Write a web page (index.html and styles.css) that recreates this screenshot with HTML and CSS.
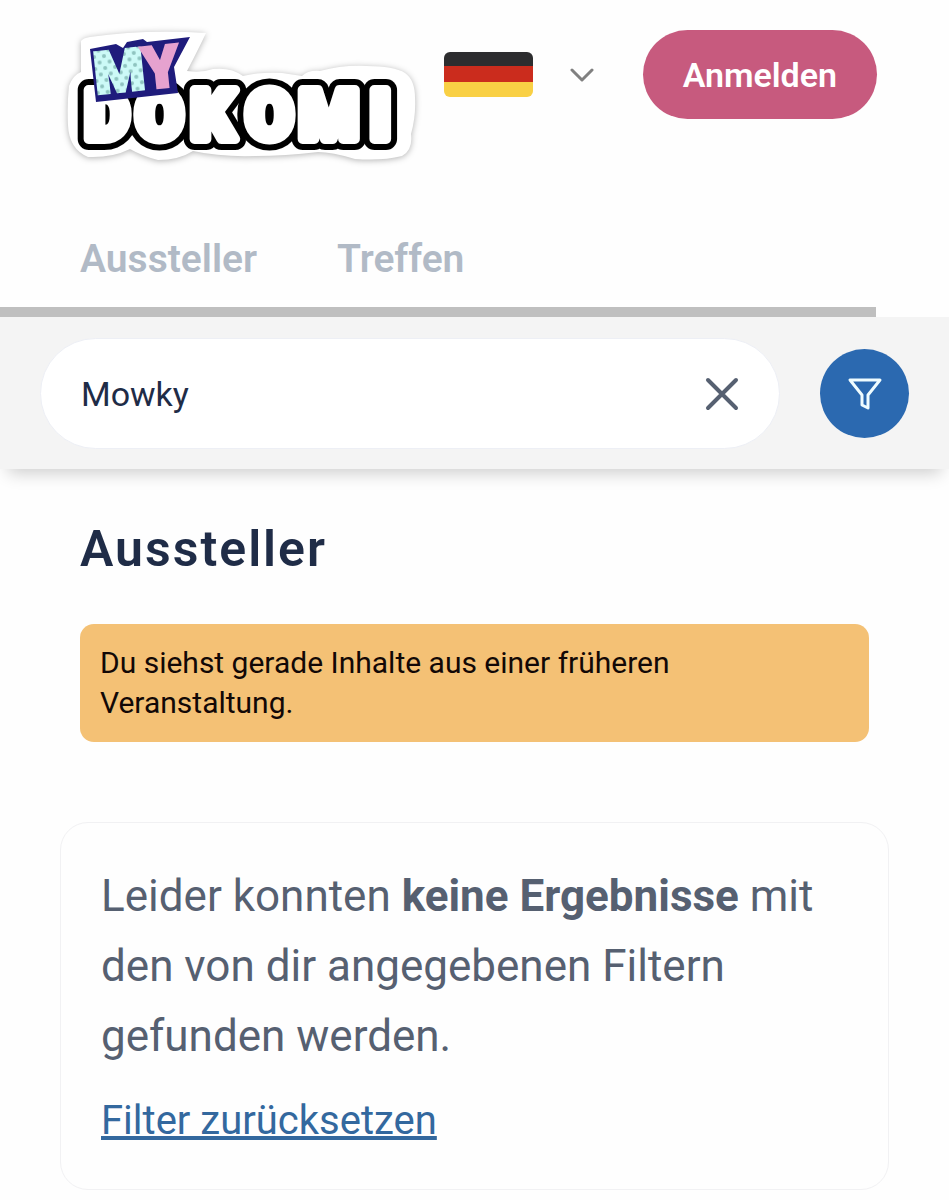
FILE: index.html
```html
<!DOCTYPE html>
<html lang="de">
<head>
    <meta charset="UTF-8">
    <meta name="viewport" content="width=device-width, initial-scale=1.0">
    <title>Aussteller - MyDoKomi</title>
    <link rel="stylesheet" href="styles.css">
</head>
<body>
    <header class="header">
        <a class="logo" href="#" aria-label="My Dokomi">
            <svg width="368" height="160" viewBox="60 15 368 160">
                <defs>
                    <pattern id="dots" width="10" height="12" patternUnits="userSpaceOnUse">
                        <rect width="10" height="12" fill="#ccfaf7"/>
                        <circle cx="3" cy="3" r="2" fill="#8fc4c0"/>
                        <circle cx="8" cy="9" r="2" fill="#8fc4c0"/>
                    </pattern>
                </defs>
                <path class="sticker" d="M81 41Q83 38 90 37Q145 29 206 33Q200 46 187 71Q202 73 213 69Q231 67 243 76Q258 72 282 73L302 76Q308 70 320 71Q342 65 366 66Q394 66 405 73Q415 80 415 98Q416 116 411 134Q413 150 402 156Q382 161 355 159Q332 152 318 152Q285 156 255 156Q220 157 193 151Q179 160 158 160Q142 156 130 149Q112 158 88 157Q69 149 68 125Q67 105 69 86Q73 75 81 72Z"/>
                <g class="word">
                    <text id="dokomi" x="85 136 191 246 299 370" y="139">DOKOMI</text>
                    <use href="#dokomi" class="word-fill"/>
                </g>
                <path fill="#1f1c7c" d="M90 49L116 44L123 48L127 42L143 39L147 42L190 37L174 67L178 93L96 102Z"/>
                <g class="my" transform="rotate(-6 97 95)">
                    <text x="96" y="94" fill="url(#dots)" stroke="url(#dots)">M</text>
                    <text x="145" y="94" fill="#e6a2cf" stroke="#e6a2cf">Y</text>
                </g>
            </svg>
        </a>
        <button class="language" type="button" aria-label="Sprache: Deutsch">
            <svg class="flag" width="89" height="45" viewBox="0 0 89 45">
                <path fill="#2d2d2f" d="M0 0h89v15H0z"/>
                <path fill="#cb2c1d" d="M0 14h89v16H0z"/>
                <path fill="#f9d045" d="M0 30h89v15H0z"/>
            </svg>
            <svg width="24" height="16" viewBox="0 0 24 16" fill="none" stroke="#808080" stroke-width="3" stroke-linecap="round" stroke-linejoin="round">
                <path d="M2 3l10 10L22 3"/>
            </svg>
        </button>
        <button class="login" type="button">Anmelden</button>
    </header>

    <nav class="nav">
        <a href="#">Aussteller</a>
        <a href="#">Treffen</a>
    </nav>

    <form class="search">
        <div class="search-field">
            <input type="text" value="Mowky" aria-label="Suche">
            <button class="clear" type="reset" aria-label="Suche leeren">
                <svg width="34" height="34" viewBox="0 0 34 34" fill="none" stroke="#566071" stroke-width="4" stroke-linecap="round">
                    <path d="M3 3l28 28M31 3L3 31"/>
                </svg>
            </button>
        </div>
        <button class="filter" type="button" aria-label="Filter">
            <svg width="36" height="36" viewBox="0 0 36 36" fill="none" stroke="#effcff" stroke-width="3" stroke-linejoin="round">
                <path d="M3 4h30L21 19v13l-6-3V19z"/>
            </svg>
        </button>
    </form>

    <main class="content">
        <h1>Aussteller</h1>
        <div class="notice">Du siehst gerade Inhalte aus einer früheren Veranstaltung.</div>
        <section class="card">
            <p>Leider konnten <strong>keine Ergebnisse</strong> mit den von dir angegebenen Filtern gefunden werden.</p>
            <a href="#">Filter zurücksetzen</a>
        </section>
    </main>
</body>
</html>
```
FILE: styles.css
```css
* {
    margin: 0;
    padding: 0;
    box-sizing: border-box;
}

body {
    font-family: Roboto, sans-serif;
    color: #1f2c47;
    background: #fefefe;
}

button {
    font-family: inherit;
    border: none;
    background: none;
    cursor: pointer;
}

svg {
    display: block;
}

.header {
    display: flex;
    align-items: flex-start;
    padding: 15px 72px 32px 60px;
}

.sticker {
    fill: white;
    filter: drop-shadow(0 1px 3px rgba(0, 0, 0, 0.3));
}

.word {
    font-size: 68px;
    font-weight: 900;
    stroke-linejoin: round;
    stroke: black;
    stroke-width: 22px;
}

.word-fill {
    fill: white;
    stroke: white;
    stroke-width: 10px;
}

.my {
    font-size: 58px;
    font-weight: 900;
    stroke-width: 3px;
}

.language {
    display: flex;
    align-items: center;
    gap: 37px;
    margin: 37px auto 0 16px;
}

.flag {
    border-radius: 6px;
}

.login {
    height: 89px;
    margin-top: 15px;
    padding: 0 40px;
    border-radius: 45px;
    background: #c75a7e;
    color: white;
    font-size: 34px;
    font-weight: 600;
}

.nav {
    display: flex;
    gap: 80px;
    margin-right: 73px;
    padding: 28px 80px 24px;
    border-bottom: 10px solid #bfbfbf;
}

.nav a {
    color: #b1bac6;
    font-size: 39px;
    font-weight: 600;
    line-height: 48px;
    text-decoration: none;
}

.search {
    display: flex;
    align-items: center;
    gap: 40px;
    padding: 21px 40px 20px;
    background: #f4f4f4;
    box-shadow: 0 12px 16px -8px rgba(0, 0, 0, 0.2);
}

.search-field {
    display: flex;
    flex: 1;
    align-items: center;
    height: 111px;
    padding: 0 40px;
    border: 1px solid #edeff5;
    border-radius: 56px;
    background: white;
}

.search-field input {
    flex: 1;
    min-width: 0;
    border: none;
    outline: none;
    background: none;
    color: #1f2c47;
    font-family: inherit;
    font-size: 34px;
}

.filter {
    display: flex;
    align-items: center;
    justify-content: center;
    width: 89px;
    height: 89px;
    border-radius: 50%;
    background: #2b69b0;
}

.content {
    padding: 50px 60px 10px;
}

h1 {
    margin: 0 20px 45px;
    font-size: 50px;
    font-weight: 600;
    line-height: 60px;
    letter-spacing: 2px;
}

.notice {
    margin: 0 20px 80px;
    padding: 19px 20px;
    border-radius: 14px;
    background: #f4c175;
    color: #120806;
    font-size: 30px;
    line-height: 40px;
}

.card {
    padding: 38px 40px;
    border: 1px solid #f1f1f3;
    border-radius: 28px;
    color: #566071;
}

.card p {
    margin-bottom: 20px;
    font-size: 44px;
    line-height: 70px;
}

.card a {
    color: #33689e;
    font-size: 40px;
    line-height: 60px;
}
```
